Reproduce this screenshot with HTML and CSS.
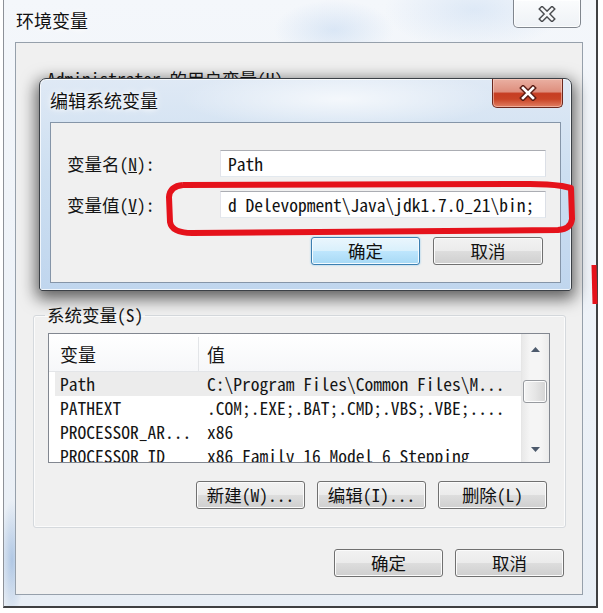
FILE: index.html
```html
<!DOCTYPE html>
<html>
<head>
<meta charset="utf-8">
<link rel="stylesheet" href="styles.css">
</head>
<body>
<div class="window">
	<div class="titlebar">
		<span class="title">环境变量</span>
		<span class="close close-idle">
			<svg width="20" height="16" viewBox="0 0 20 16"><path d="M5 3 L15 13 M15 3 L5 13" stroke="#4a4c50" stroke-width="5.4" stroke-linecap="square"/><path d="M5 3 L15 13 M15 3 L5 13" stroke="#f6f7f8" stroke-width="2.6" stroke-linecap="square"/></svg>
		</span>
	</div>
	<div class="client">
		<div class="user-label">Administrator 的用户变量(U)</div>
		<div class="user-vars"></div>
		<fieldset class="group">
			<legend>系统变量(S)</legend>
			<div class="list">
				<div class="list-main">
					<div class="list-head"><span class="col1">变量</span><span class="col2">值</span></div>
					<div class="row selected"><span class="col1">Path</span><span class="col2">C:\Program Files\Common Files\M...</span></div>
					<div class="row"><span class="col1">PATHEXT</span><span class="col2">.COM;.EXE;.BAT;.CMD;.VBS;.VBE;....</span></div>
					<div class="row"><span class="col1">PROCESSOR_AR...</span><span class="col2">x86</span></div>
					<div class="row"><span class="col1">PROCESSOR_ID</span><span class="col2">x86 Family 16 Model 6 Stepping</span></div>
				</div>
				<div class="scrollbar">
					<div class="sb-btn sb-up"><svg width="9" height="5" viewBox="0 0 9 5"><path d="M0 5 L4.5 0 L9 5 Z" fill="#4d5a6c"/></svg></div>
					<div class="sb-track"><div class="sb-thumb"></div></div>
					<div class="sb-btn"><svg width="9" height="5" viewBox="0 0 9 5"><path d="M0 0 L9 0 L4.5 5 Z" fill="#4d5a6c"/></svg></div>
				</div>
			</div>
			<div class="buttons group-buttons">
				<button class="btn">新建(W)...</button>
				<button class="btn">编辑(I)...</button>
				<button class="btn">删除(L)</button>
			</div>
		</fieldset>
		<div class="buttons footer">
			<button class="btn">确定</button>
			<button class="btn">取消</button>
		</div>
	</div>
</div>

<div class="dialog">
	<div class="titlebar">
		<span class="title">编辑系统变量</span>
		<span class="close close-red">
			<svg width="20" height="16" viewBox="0 0 20 16"><path d="M5 3 L15 13 M15 3 L5 13" stroke="#5b1d14" stroke-width="5.4" stroke-linecap="square"/><path d="M5 3 L15 13 M15 3 L5 13" stroke="#fff" stroke-width="2.6" stroke-linecap="square"/></svg>
		</span>
	</div>
	<div class="client dialog-client">
		<div class="field">
			<label>变量名(<u>N</u>):</label>
			<input class="textbox" type="text" value="Path">
		</div>
		<div class="field">
			<label>变量值(<u>V</u>):</label>
			<input class="textbox" type="text" value="d Delevopment\Java\jdk1.7.0_21\bin;">
		</div>
		<div class="buttons dialog-buttons">
			<button class="btn default">确定</button>
			<button class="btn">取消</button>
		</div>
	</div>
</div>

<svg class="marker" width="603" height="613" viewBox="0 0 603 613">
	<path d="M183 185 L530 184 Q548 184 562 186 L571 188 L572 219 Q571 229 558 230 L192 233 Q172 233 170 222 L169 197 Q170 186 183 185" fill="none" stroke="#e5121b" stroke-width="6" stroke-linejoin="round"/>
	<path d="M594 265 L595 304" fill="none" stroke="#e5121b" stroke-width="5"/>
</svg>
</body>
</html>
```

FILE: styles.css
```css
body {
	margin: 0;
	position: relative;
	width: 603px;
	height: 613px;
	overflow: hidden;
	background: #fff;
	color: #151515;
	font-family: "Noto Sans Mono CJK SC", "Liberation Mono", "Noto Sans CJK SC", monospace;
	font-size: 17.5px;
}

/* outer window, inactive glass frame */
.window {
	box-sizing: border-box;
	width: 595px;
	height: 608px;
	margin-left: 3px;
	padding: 0 13px 11px 11px;
	display: flex;
	flex-direction: column;
	border-left: 1px solid #8d9198;
	border-right: 2px solid #3f4042;
	border-bottom: 2px solid #3f4042;
	background:
		radial-gradient(ellipse 60px 30px at 330px 30px, rgba(170,200,235,.35), transparent),
		radial-gradient(ellipse 90px 40px at 470px 10px, rgba(170,200,235,.3), transparent),
		radial-gradient(ellipse 12px 60px at 8px 560px, rgba(120,160,210,.5), transparent),
		linear-gradient(#f4f7fb, #e8eef5);
}

.titlebar {
	display: flex;
	justify-content: space-between;
	align-items: flex-start;
	height: 42px;
	flex: none;
}
.title {
	font-family: "Noto Sans CJK SC", sans-serif;
	font-size: 18px;
	line-height: 18px;
	margin: 11px 0 0 1px;
	color: #111;
	text-shadow: 0 0 8px #fff, 0 0 4px #fff;
}

.close {
	display: flex;
	align-items: center;
	justify-content: center;
	box-sizing: border-box;
	border: 1px solid #80868e;
	border-top: none;
	border-radius: 0 0 5px 5px;
}
.close-idle {
	width: 68px;
	height: 28px;
	margin-right: 2px;
	background: linear-gradient(#fbfcfd, #eef2f6);
	box-shadow: inset 0 0 0 1px rgba(255,255,255,.8);
}
.close-red {
	width: 71px;
	height: 29px;
	margin-right: -2px;
	border-color: #6b281e;
	background: linear-gradient(#eab0a2 0%, #de8f7e 45%, #c63d22 52%, #c94426 72%, #e17f63 100%);
	box-shadow: inset 0 0 0 1px rgba(255,220,210,.5);
}

.client {
	box-sizing: border-box;
	flex: 1;
	display: flex;
	flex-direction: column;
	padding: 26px 16px 0 17px;
	background: #f0f0f0;
	border: 1px solid #96a0ab;
}

.user-label {
	height: 20px;
	line-height: 20px;
	margin-left: 14px;
	white-space: nowrap;
}
.user-vars {
	height: 216px;
}

/* group box */
.group {
	margin: 0;
	min-width: 0;
	padding: 8px 15px 18px 14px;
	border: 1px solid #d5d9dd;
	border-radius: 3px;
	box-shadow: inset 0 0 0 1px #fbfbfb;
}
.group legend {
	line-height: 20px;
	padding: 0 2px;
	margin-left: -3px;
}

/* list view */
.list {
	display: flex;
	height: 130px;
	box-sizing: border-box;
	border: 1px solid #828790;
	background: #fff;
	overflow: hidden;
}
.list-main {
	flex: 1;
	overflow: hidden;
}
.list-head {
	display: flex;
	height: 38px;
	box-sizing: border-box;
	padding-top: 3px;
	align-items: center;
	border-bottom: 1px solid #e3e5e8;
	background: linear-gradient(#fff, #f6f7f9);
	font-family: "Noto Sans CJK SC", sans-serif;
	font-size: 18px;
}
.list-head .col1 {
	border-right: 1px solid #e3e5e8;
	align-self: stretch;
	display: flex;
	align-items: center;
}
.row {
	display: flex;
	height: 24px;
	line-height: 24px;
	white-space: nowrap;
}
.row.selected {
	background: linear-gradient(to right, transparent 6px, #ececec 6px);
}
.col1 {
	box-sizing: border-box;
	width: 150px;
	flex: none;
	padding-left: 11px;
	overflow: hidden;
}
.col2 {
	padding-left: 8px;
}

.scrollbar {
	width: 27px;
	flex: none;
	display: flex;
	flex-direction: column;
	border-left: 1px solid #e6e6e6;
	background: linear-gradient(to right, #e9e9e9, #f5f5f5 30%, #f5f5f5 70%, #ebebeb);
}
.sb-btn {
	height: 26px;
	display: flex;
	align-items: center;
	justify-content: center;
}
.sb-up {
	height: 30px;
}
.sb-track {
	flex: 1;
}
.sb-thumb {
	height: 23px;
	margin: 16px 2px 0 1px;
	box-sizing: border-box;
	border: 1px solid #979a9f;
	border-radius: 3px;
	background: linear-gradient(to right, #f4f4f4, #e6e6e6 50%, #d4d4d4);
	box-shadow: inset 0 0 0 1px #fdfdfd;
}

/* buttons */
.buttons {
	display: flex;
	justify-content: flex-end;
	gap: 12px;
}
.btn {
	box-sizing: border-box;
	width: 109px;
	height: 28px;
	padding: 0;
	font: inherit;
	line-height: 26px;
	color: #111;
	border: 1px solid #707070;
	border-radius: 3px;
	background: linear-gradient(#f2f2f2 0%, #ebebeb 49%, #dddddd 51%, #cfcfcf 100%);
	box-shadow: inset 0 0 0 1px #fbfbfb;
}
.btn.default {
	border-color: #3c7fb1;
	background: linear-gradient(#eaf6fd 0%, #d9f0fc 49%, #bee6fd 51%, #a7d9f5 100%);
	box-shadow: inset 0 0 0 1px #f4fbff, 0 0 2px #7ec3ec;
}
.group-buttons {
	margin-top: 18px;
	padding-right: 3px;
}
.footer {
	margin-top: 21px;
	margin-right: 2px;
}

/* edit dialog on top */
.dialog {
	position: absolute;
	left: 39px;
	top: 78px;
	width: 533px;
	height: 213px;
	box-sizing: border-box;
	display: flex;
	flex-direction: column;
	padding: 0 10px 7px 10px;
	border: 1px solid #3b4046;
	border-radius: 7px 7px 3px 3px;
	background:
		radial-gradient(ellipse 160px 30px at 300px 20px, rgba(255,255,255,.7), transparent),
		linear-gradient(#dfe9f5, #cddff1 45%, #c0d6ee);
	box-shadow: inset 0 0 0 1px rgba(255,255,255,.75), 0 5px 16px 3px rgba(0,0,0,.6);
}
.dialog .titlebar {
	height: 43px;
}
.dialog .title {
	margin: 12px 0 0 0;
}
.dialog-client {
	flex: none;
	height: 161px;
	padding: 27px 14px 0 16px;
	border-color: #8595a8;
}

.field {
	display: flex;
	align-items: center;
	margin-bottom: 14px;
}
.field label {
	width: 153px;
	flex: none;
}
.textbox {
	flex: 1;
	min-width: 0;
	box-sizing: border-box;
	height: 27px;
	margin: 0;
	padding: 0 0 0 7px;
	font: inherit;
	color: #111;
	background: #fff;
	border: 1px solid;
	border-color: #abadb3 #dbdfe6 #e3e9ef #e2e3ea;
	outline: none;
}
.dialog-buttons {
	margin-top: 5px;
	padding-right: 3px;
	gap: 13px;
}
.dialog-buttons .btn:last-child {
	width: 110px;
}

.marker {
	position: absolute;
	left: 0;
	top: 0;
	pointer-events: none;
}
```
